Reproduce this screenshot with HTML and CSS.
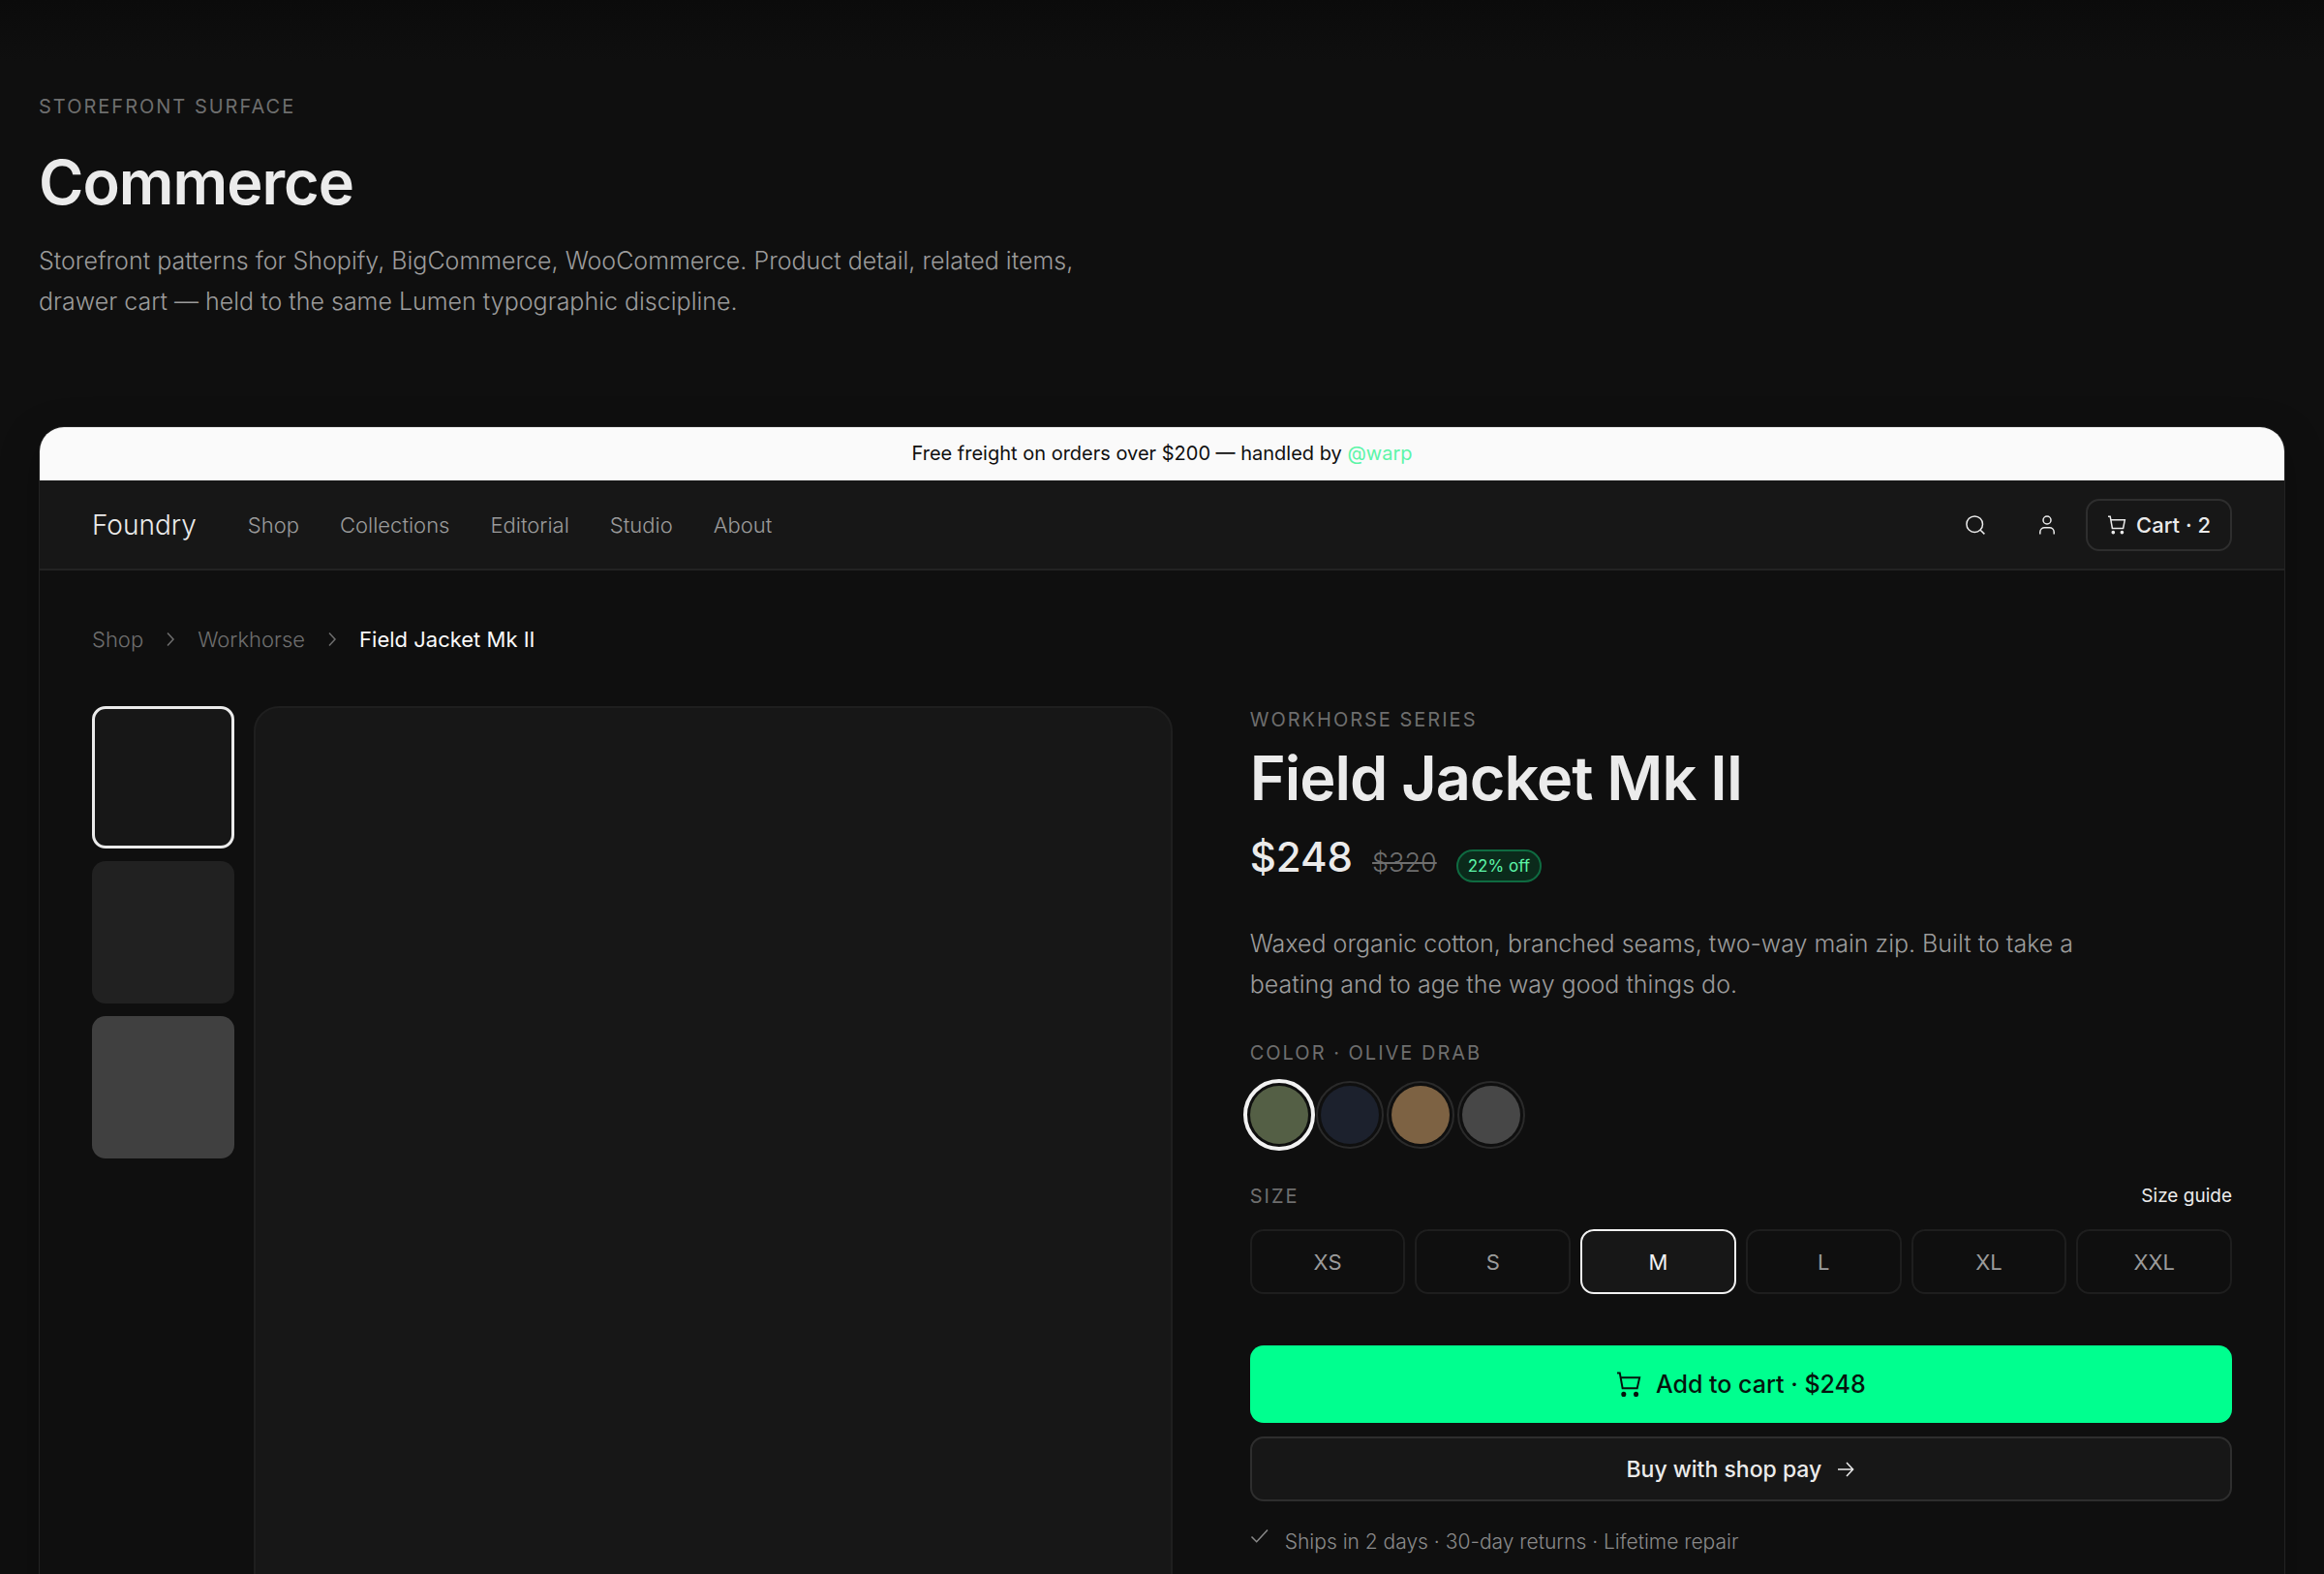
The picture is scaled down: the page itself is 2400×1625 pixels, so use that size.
FILE: index.html
```html
<!DOCTYPE html>
<html lang="en">
<head>
  <meta charset="UTF-8" />
  <meta name="viewport" content="width=device-width, initial-scale=1" />
  <title>Commerce</title>
  <link rel="stylesheet" href="styles.css">
</head>
<body>

  <section class="surface">
    <header class="intro">
      <p class="eyebrow">Storefront surface</p>
      <h1 class="title">Commerce</h1>
      <p class="lede">Storefront patterns for Shopify, BigCommerce, WooCommerce. Product detail, related items, drawer cart — held to the same Lumen typographic discipline.</p>
    </header>

    <div class="store">
      <p class="announce">Free freight on orders over $200 — handled by <a href="#warp">@warp</a></p>

      <div class="store-bar">
        <a class="brand" href="#home">Foundry</a>
        <nav class="store-nav">
          <a href="#shop">Shop</a>
          <a href="#collections">Collections</a>
          <a href="#editorial">Editorial</a>
          <a href="#studio">Studio</a>
          <a href="#about">About</a>
        </nav>
        <div class="store-actions">
          <button class="icon-btn" type="button" aria-label="Search">
            <svg class="icon" viewBox="0 0 20 20"><circle cx="9.2" cy="9.2" r="8.3"/><path d="M15.2 15.2l4.2 4.2"/></svg>
          </button>
          <button class="icon-btn" type="button" aria-label="Account">
            <svg class="icon" viewBox="0 0 20 20"><circle cx="10" cy="5" r="4"/><path d="M2.8 19.4v-2.2a4.6 4.6 0 0 1 4.6-4.4h5.2a4.6 4.6 0 0 1 4.6 4.4v2.2"/></svg>
          </button>
          <button class="cart-btn" type="button">
            <svg class="icon" viewBox="0 0 20 20"><path d="M1 1.2h2.2l2.2 12.2h11.2l1.7-8.6H4"/><circle class="dot" cx="6.3" cy="17.6" r="1.1"/><circle class="dot" cx="15.4" cy="17.6" r="1.1"/></svg>
            Cart · 2
          </button>
        </div>
      </div>

      <main class="product">
        <nav class="crumbs" aria-label="Breadcrumb">
          <a href="#shop">Shop</a>
          <svg class="chevron" viewBox="0 0 20 20"><path d="M7 3.5l6 6.5-6 6.5"/></svg>
          <a href="#workhorse">Workhorse</a>
          <svg class="chevron" viewBox="0 0 20 20"><path d="M7 3.5l6 6.5-6 6.5"/></svg>
          <span class="current">Field Jacket Mk II</span>
        </nav>

        <div class="product-grid">
          <div class="gallery">
            <div class="thumbs">
              <button class="thumb selected" type="button" aria-label="View 1"></button>
              <button class="thumb mid" type="button" aria-label="View 2"></button>
              <button class="thumb light" type="button" aria-label="View 3"></button>
            </div>
            <div class="photo"></div>
          </div>

          <form class="info">
            <p class="eyebrow">Workhorse series</p>
            <h2 class="title product-name">Field Jacket Mk II</h2>
            <div class="price-row">
              <span class="price">$248</span>
              <s class="was">$320</s>
              <span class="badge">22% off</span>
            </div>
            <p class="lede about">Waxed organic cotton, branched seams, two-way main zip. Built to take a beating and to age the way good things do.</p>

            <p class="eyebrow">Color · Olive drab</p>
            <div class="swatches">
              <input class="swatch olive" type="radio" name="color" aria-label="Olive drab" checked>
              <input class="swatch navy" type="radio" name="color" aria-label="Navy">
              <input class="swatch tan" type="radio" name="color" aria-label="Tan">
              <input class="swatch grey" type="radio" name="color" aria-label="Grey">
            </div>

            <div class="size-head">
              <p class="eyebrow">Size</p>
              <a href="#size-guide">Size guide</a>
            </div>
            <div class="sizes">
              <label class="size"><input type="radio" name="size">XS</label>
              <label class="size"><input type="radio" name="size">S</label>
              <label class="size"><input type="radio" name="size" checked>M</label>
              <label class="size"><input type="radio" name="size">L</label>
              <label class="size"><input type="radio" name="size">XL</label>
              <label class="size"><input type="radio" name="size">XXL</label>
            </div>

            <button class="btn primary" type="button">
              <svg class="icon" viewBox="0 0 20 20"><path d="M.8 1.2h2.1l2.2 12h11.6l1.9-8.4H3.6"/><circle class="dot" cx="6" cy="18" r="1.2"/><circle class="dot" cx="15.8" cy="18" r="1.2"/></svg>
              Add to cart · $248
            </button>
            <button class="btn secondary" type="button">
              Buy with shop pay
              <svg class="icon" viewBox="0 0 20 20"><path d="M2 10h15.5M11 3l6.6 7L11 17"/></svg>
            </button>
            <p class="perks">
              <svg class="icon" viewBox="0 0 20 20"><path d="M1.5 10.5l5.2 5.2L18 3.5"/></svg>
              Ships in 2 days · 30-day returns · Lifetime repair
            </p>
          </form>
        </div>
      </main>
    </div>
  </section>

</body>
</html>
```

FILE: styles.css
```css
* {
  box-sizing: border-box;
}
body {
  margin: 0;
  background: linear-gradient(#0b0b0b, #0f0f0f 64px) #0f0f0f;
  color: #ebebeb;
  font-family: Inter, "Liberation Sans", sans-serif;
  font-size: 22px;
  font-weight: 300;
}
p, h1, h2 {
  margin: 0;
}
a {
  color: inherit;
  text-decoration: none;
}
button {
  font: inherit;
  color: inherit;
  cursor: pointer;
}
.surface {
  height: 100vh;
  padding: 96px 40px 0;
  overflow: hidden;
}
.eyebrow {
  color: #6e6e6e;
  font-size: 20px;
  font-weight: 400;
  line-height: 28px;
  letter-spacing: 2px;
  text-transform: uppercase;
}
.title {
  font-size: 63px;
  font-weight: 600;
  line-height: 72px;
  letter-spacing: -1px;
}
.lede {
  max-width: 1100px;
  color: #9b9b9b;
  font-size: 25px;
  line-height: 42px;
}
.intro .title {
  margin: 28px 0 24px;
}
.icon {
  width: 20px;
  height: 20px;
  flex: none;
  fill: none;
  stroke: currentColor;
  stroke-width: 1.5;
}
.icon .dot {
  fill: currentColor;
}

/* storefront frame */
.store {
  margin-top: 108px;
  border: 1px solid #232323;
  border-radius: 26px;
  overflow: hidden;
  box-shadow: 0 12px 40px rgba(0, 0, 0, 0.25);
}
.announce {
  padding: 12px;
  background: #fafafa;
  color: #0f0f0f;
  font-size: 20px;
  font-weight: 400;
  line-height: 31px;
  text-align: center;
}
.announce a {
  color: #5cf5a8;
}
.store-bar {
  display: flex;
  align-items: center;
  height: 93px;
  padding: 0 54px;
  background: #171717;
  border-bottom: 2px solid #232323;
}
.brand {
  margin-right: 53px;
  font-size: 28px;
}
.store-nav {
  display: flex;
  gap: 42px;
  color: #9b9b9b;
}
.store-actions {
  display: flex;
  gap: 7px;
  margin-left: auto;
}
.icon-btn {
  display: grid;
  place-items: center;
  width: 67px;
  padding: 0;
  background: none;
  border: 0;
}
.cart-btn {
  display: flex;
  align-items: center;
  gap: 10px;
  height: 54px;
  padding: 0 20px;
  background: none;
  border: 2px solid #2e2e2e;
  border-radius: 14px;
  font-weight: 500;
}

/* product page */
.product {
  padding: 56px 54px;
}
.crumbs {
  display: flex;
  align-items: center;
  gap: 18px;
  color: #6e6e6e;
  line-height: 30px;
}
.crumbs .current {
  color: #fafafa;
  font-weight: 400;
}
.chevron {
  width: 20px;
  height: 20px;
  fill: none;
  stroke: #6e6e6e;
  stroke-width: 1.5;
}
.product-grid {
  display: grid;
  grid-template-columns: 11fr 10fr;
  gap: 80px;
  margin-top: 54px;
}
.gallery {
  display: flex;
  align-items: flex-start;
  gap: 20px;
}
.thumbs {
  display: grid;
  gap: 13px;
}
.thumb {
  width: 147px;
  height: 147px;
  padding: 0;
  background: #171717;
  border: 0;
  border-radius: 14px;
}
.thumb.selected {
  border: 3px solid #ebebeb;
}
.thumb.mid {
  background: #212121;
}
.thumb.light {
  background: #404040;
}
.photo {
  flex: 1;
  aspect-ratio: 4 / 5;
  background: #171717;
  border: 2px solid #1f1f1f;
  border-radius: 26px;
}
.product-name {
  margin-top: 10px;
}
.price-row {
  display: flex;
  align-items: baseline;
  gap: 20px;
  margin-top: 20px;
  line-height: 52px;
}
.price {
  font-size: 42px;
  font-weight: 500;
}
.was {
  color: #6e6e6e;
  font-size: 27px;
}
.badge {
  padding: 0 10px;
  background: #0b2a1b;
  border: 2px solid #0f6b41;
  border-radius: 17px;
  color: #5cf5a8;
  font-size: 17px;
  font-weight: 400;
  line-height: 30px;
}
.about {
  max-width: 900px;
  margin: 36px 0;
}
.swatches {
  display: flex;
  gap: 13px;
  margin: 20px 0 40px;
}
.swatch {
  appearance: none;
  width: 60px;
  height: 60px;
  margin: 0;
  border-radius: 50%;
  outline: 2px solid #2a2a2a;
  outline-offset: 3px;
}
.swatch:checked {
  outline: 4px solid #f2f2f2;
}
.olive {
  background: #545f45;
}
.navy {
  background: #1c212d;
}
.tan {
  background: #7d6243;
}
.grey {
  background: #474747;
}
.size-head {
  display: flex;
  justify-content: space-between;
}
.size-head a {
  font-size: 19px;
  font-weight: 400;
  line-height: 28px;
}
.sizes {
  display: grid;
  grid-template-columns: repeat(6, 1fr);
  gap: 10px;
  margin: 20px 0 53px;
}
.size {
  display: grid;
  place-items: center;
  height: 67px;
  border: 2px solid #1e1e1e;
  border-radius: 14px;
  color: #9b9b9b;
  font-weight: 400;
}
.size input {
  position: absolute;
  opacity: 0;
}
.size:has(:checked) {
  background: #171717;
  border-color: #f2f2f2;
  color: #f2f2f2;
}
.btn {
  display: flex;
  align-items: center;
  justify-content: center;
  gap: 15px;
  width: 100%;
  border-radius: 14px;
  font-weight: 500;
}
.primary {
  height: 80px;
  background: #00ff8f;
  border: 0;
  color: #06140d;
  font-size: 25px;
}
.primary .icon {
  width: 26px;
  height: 26px;
}
.secondary {
  height: 67px;
  margin-top: 14px;
  background: #171717;
  border: 2px solid #2e2e2e;
  font-size: 23px;
}
.perks {
  display: flex;
  gap: 16px;
  margin-top: 26px;
  color: #8a8a8a;
  font-size: 21px;
  line-height: 32px;
}
```
